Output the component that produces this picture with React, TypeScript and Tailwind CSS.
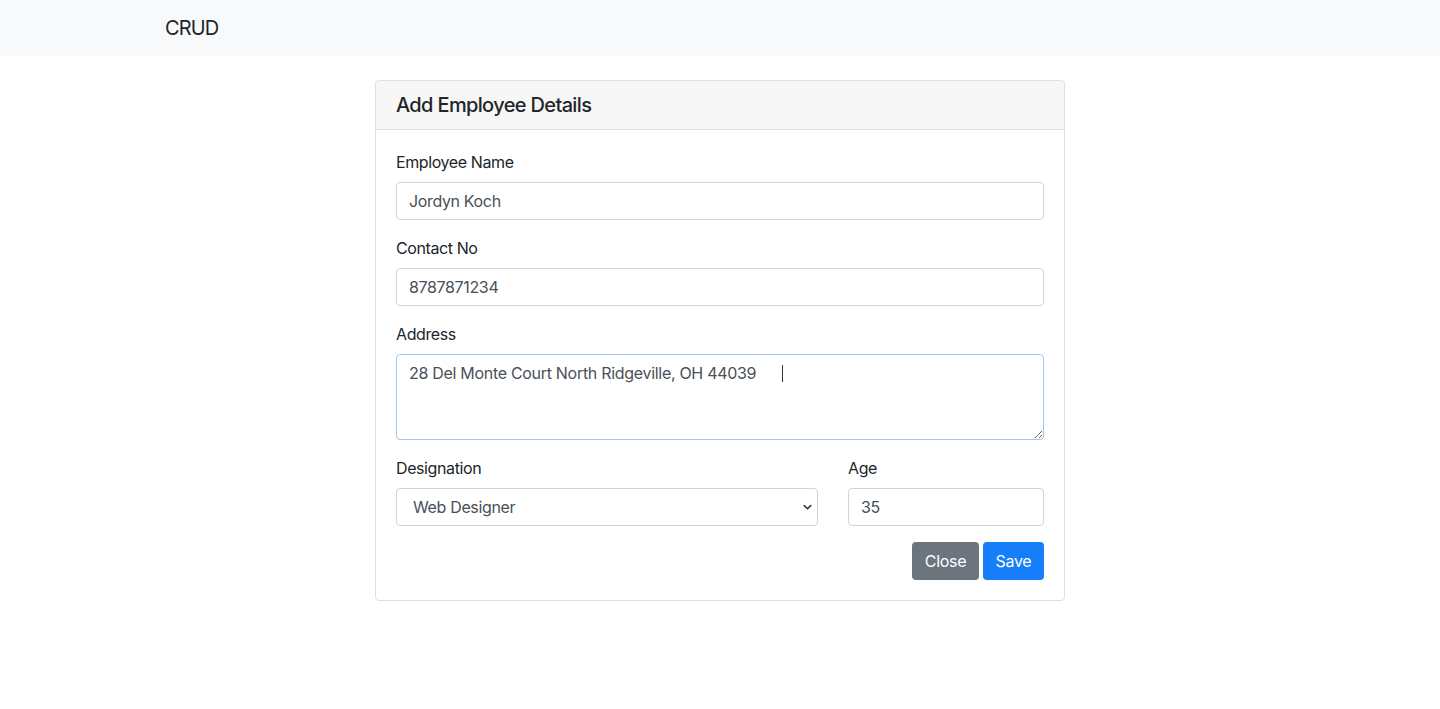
import React from "react";

const font = { fontFamily: "Inter, 'Noto Sans', sans-serif" };

function Label({ children }: { children: React.ReactNode }) {
  return <label className="block text-[16px] leading-[24px] text-[#212529] mb-2 tracking-[-0.4px]">{children}</label>;
}

const inputCls =
  "w-full h-[38px] px-3 border border-[#ced4da] rounded-[4px] text-[16px] text-[#495057] outline-none tracking-[-0.35px]";

export default function App() {
  return (
    <div className="min-h-[709px] bg-white" style={font}>
      <nav className="h-14 bg-[#f8f9fa] flex items-center">
        <div className="w-[1140px] mx-auto px-[15px]">
          <span className="text-[20px] leading-[30px] text-[#212529] tracking-[-0.9px]">CRUD</span>
        </div>
      </nav>
      <div className="pt-6">
        <div className="w-[690px] mx-auto border border-[#dfdfdf] rounded-[4px]">
          <div className="bg-[#f7f7f7] border-b border-[#dfdfdf] px-5 py-3 rounded-t-[4px]">
            <h5 className="text-[20px] leading-[24px] font-medium text-[#212529] tracking-[-0.65px]">Add Employee Details</h5>
          </div>
          <div className="p-5">
            <div className="mb-4">
              <Label>Employee Name</Label>
              <input readOnly value="Jordyn Koch" className={inputCls} />
            </div>
            <div className="mb-4">
              <Label>Contact No</Label>
              <input readOnly value="8787871234" className={inputCls} />
            </div>
            <div className="mb-4 relative">
              <Label>Address</Label>
              <textarea
                readOnly
                rows={3}
                value="28 Del Monte Court North Ridgeville, OH 44039"
                className="block w-full h-[86px] px-3 py-[6px] border border-[#a9c5e9] rounded-[4px] text-[16px] leading-[24px] text-[#495057] outline-none resize-y tracking-[-0.3px]"
              />
              <div className="absolute left-[386px] top-[43px] w-px h-[17px] bg-[#333]" />
            </div>
            <div className="flex gap-[30px] mb-4">
              <div className="w-[422px]">
                <Label>Designation</Label>
                <div className="relative h-[38px] border border-[#ced4da] rounded-[4px] flex items-center pl-4 text-[16px] text-[#495057] tracking-[-0.35px]">
                  Web Designer
                  <svg className="absolute right-[5px] top-[15px]" width="9" height="7" viewBox="0 0 9 7">
                    <path d="M1.2 1.5 L4.5 4.8 L7.8 1.5" stroke="#333" strokeWidth="1.6" fill="none" strokeLinecap="round" strokeLinejoin="round" />
                  </svg>
                </div>
              </div>
              <div className="w-[196px]">
                <Label>Age</Label>
                <input readOnly value="35" className={inputCls} />
              </div>
            </div>
            <div className="flex justify-end gap-1">
              <button className="h-[38px] w-[67px] bg-[#6c757d] text-white text-[16px] rounded-[4px] tracking-[-0.3px]">Close</button>
              <button className="h-[38px] w-[61px] bg-[#157ef8] text-white text-[16px] rounded-[4px] tracking-[-0.3px]">Save</button>
            </div>
          </div>
        </div>
      </div>
    </div>
  );
}
